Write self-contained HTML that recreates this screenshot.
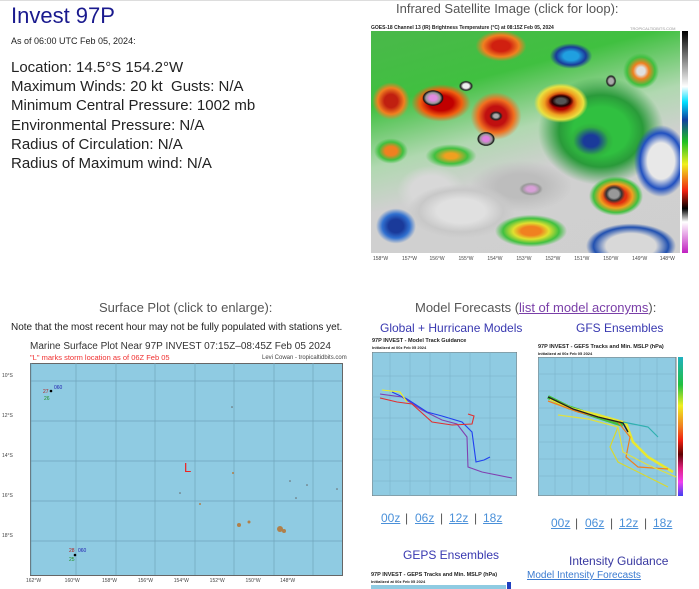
<!DOCTYPE html>
<html><head><meta charset="utf-8"><style>
*{margin:0;padding:0;box-sizing:border-box}
body{width:699px;height:589px;overflow:hidden;background:#fff;font-family:"Liberation Sans",sans-serif;position:relative}
.a{position:absolute;white-space:nowrap}
.h{color:#555;font-size:13px}
.b{color:#3838b0;font-size:12px}
.lk{color:#4a90d9;text-decoration:underline}
.ln{font-size:15px;color:#222;left:11px}
.sm{font-size:5px;color:#444}
</style></head><body>
<div style="position:absolute;left:0;top:0;width:699px;height:1px;background:#ddd"></div>
<div class="a" style="left:11px;top:3px;font-size:22px;color:#1a1a8e">Invest 97P</div>
<div class="a" style="left:11px;top:36px;font-size:9px;color:#222">As of 06:00 UTC Feb 05, 2024:</div>
<div class="a ln" style="top:59px">Location: 14.5°S 154.2°W</div>
<div class="a ln" style="top:78px">Maximum Winds: 20 kt&nbsp; Gusts: N/A</div>
<div class="a ln" style="top:97px">Minimum Central Pressure: 1002 mb</div>
<div class="a ln" style="top:117px">Environmental Pressure: N/A</div>
<div class="a ln" style="top:136px">Radius of Circulation: N/A</div>
<div class="a ln" style="top:155px">Radius of Maximum wind: N/A</div>

<div class="a h" style="left:396px;top:1px">Infrared Satellite Image (click for loop):</div>
<div class="a" style="left:371px;top:25px;font-size:5px;font-weight:bold;color:#222">GOES-18 Channel 13 (IR) Brightness Temperature (°C) at 08:15Z Feb 05, 2024</div>
<div class="a" style="left:630px;top:26px;font-size:4px;color:#999">TROPICALTIDBITS.COM</div>
<div style="position:absolute;left:371px;top:31px;width:309px;height:222px;overflow:hidden;background:
radial-gradient(ellipse 12px 9px at 62px 67px,#e08ae0 30%,#999 60%,#111 80%,transparent 90%),
radial-gradient(ellipse 10px 8px at 115px 108px,#e080e0 30%,#999 60%,#111 80%,transparent 90%),
radial-gradient(ellipse 14px 8px at 160px 158px,#d8a0d8 30%,#999 65%,transparent 85%),
radial-gradient(ellipse 8px 6px at 125px 85px,#aaa 30%,#222 60%,transparent 85%),
radial-gradient(ellipse 16px 9px at 190px 70px,#555 30%,#220000 55%,transparent 80%),
radial-gradient(ellipse 14px 12px at 243px 163px,#999 35%,#333 55%,transparent 80%),
radial-gradient(ellipse 6px 7px at 240px 50px,#aaa 40%,#222 70%,transparent 90%),
radial-gradient(ellipse 8px 6px at 95px 55px,#eee 40%,#222 70%,transparent 90%),
radial-gradient(ellipse 35px 22px at 70px 72px,#c00000 35%,#f06010 60%,transparent 85%),
radial-gradient(ellipse 30px 28px at 125px 85px,#c01010 35%,#f07020 60%,transparent 85%),
radial-gradient(ellipse 30px 22px at 190px 72px,#b00000 30%,#f0a020 55%,#e8e040 75%,transparent 90%),
radial-gradient(ellipse 22px 22px at 20px 70px,#c02010 30%,#f08020 60%,transparent 85%),
radial-gradient(ellipse 30px 18px at 130px 15px,#d02010 30%,#f08020 60%,transparent 85%),
radial-gradient(ellipse 20px 15px at 20px 120px,#f08020 30%,#40c040 60%,transparent 85%),
radial-gradient(ellipse 30px 14px at 80px 125px,#f0a020 20%,#40c040 55%,transparent 85%),
radial-gradient(ellipse 40px 18px at 160px 200px,#f08020 25%,#e0e030 45%,#40c040 70%,transparent 90%),
radial-gradient(ellipse 30px 22px at 245px 165px,#e03010 35%,#f0a020 55%,#40c040 75%,transparent 90%),
radial-gradient(ellipse 25px 22px at 25px 195px,#1a3a9a 30%,#3070d0 55%,transparent 80%),
radial-gradient(ellipse 60px 30px at 90px 180px,#e0e0e0 40%,#c8c8c8 70%,transparent 90%),
radial-gradient(ellipse 60px 30px at 150px 155px,#bdbdbd 40%,transparent 85%),
radial-gradient(ellipse 40px 30px at 60px 160px,#d8d8d8 50%,transparent 85%),
radial-gradient(ellipse 30px 40px at 290px 130px,#e8e8e8 45%,#2050c0 70%,transparent 90%),
radial-gradient(ellipse 50px 25px at 260px 215px,#d8d8d8 50%,#2050b0 75%,transparent 90%),
radial-gradient(ellipse 20px 20px at 270px 40px,#e0e0e0 20%,#f08020 40%,#40c040 70%,transparent 90%),
radial-gradient(ellipse 25px 15px at 200px 25px,#20a0e0 30%,#1a3a9a 60%,transparent 85%),
radial-gradient(ellipse 25px 20px at 220px 110px,#1a3a9a 30%,#30b040 70%,transparent 90%),
radial-gradient(ellipse 70px 60px at 230px 100px,#30c040 40%,#2a9a3a 60%,transparent 90%),
linear-gradient(165deg,#4ab84a 0%,#40c040 25%,#b0d8b0 45%,#d0d0d0 60%,#cfcfcf 100%)"></div>
<div style="position:absolute;left:682px;top:31px;width:6px;height:222px;background:linear-gradient(#000,#fff 25%,#00e0ff 32%,#1040a0 40%,#20c020 50%,#f0f020 60%,#f02010 72%,#000 80%,#fff 86%,#c020c0 100%)"></div>
<div class="a sm" style="left:373px;top:256px">158°W&nbsp;&nbsp;&nbsp;&nbsp;&nbsp;&nbsp;&nbsp;&nbsp;&nbsp;&nbsp;157°W&nbsp;&nbsp;&nbsp;&nbsp;&nbsp;&nbsp;&nbsp;&nbsp;&nbsp;156°W&nbsp;&nbsp;&nbsp;&nbsp;&nbsp;&nbsp;&nbsp;&nbsp;&nbsp;&nbsp;155°W&nbsp;&nbsp;&nbsp;&nbsp;&nbsp;&nbsp;&nbsp;&nbsp;&nbsp;&nbsp;154°W&nbsp;&nbsp;&nbsp;&nbsp;&nbsp;&nbsp;&nbsp;&nbsp;&nbsp;&nbsp;153°W&nbsp;&nbsp;&nbsp;&nbsp;&nbsp;&nbsp;&nbsp;&nbsp;&nbsp;&nbsp;152°W&nbsp;&nbsp;&nbsp;&nbsp;&nbsp;&nbsp;&nbsp;&nbsp;&nbsp;&nbsp;151°W&nbsp;&nbsp;&nbsp;&nbsp;&nbsp;&nbsp;&nbsp;&nbsp;&nbsp;&nbsp;150°W&nbsp;&nbsp;&nbsp;&nbsp;&nbsp;&nbsp;&nbsp;&nbsp;&nbsp;&nbsp;149°W&nbsp;&nbsp;&nbsp;&nbsp;&nbsp;&nbsp;&nbsp;&nbsp;&nbsp;148°W</div>

<div class="a h" style="left:99px;top:300px">Surface Plot (click to enlarge):</div>
<div class="a" style="left:11px;top:322px;font-size:10px;color:#222">Note that the most recent hour may not be fully populated with stations yet.</div>
<div class="a" style="left:30px;top:341px;font-size:10px;color:#333">Marine Surface Plot Near 97P INVEST 07:15Z–08:45Z Feb 05 2024</div>
<div class="a" style="left:30px;top:353px;font-size:7.5px;color:#f03030">"L" marks storm location as of 06Z Feb 05</div>
<div class="a" style="left:262px;top:355px;font-size:6px;color:#444">Levi Cowan - tropicaltidbits.com</div>
<svg style="position:absolute;left:30px;top:363px" width="313" height="213">
<rect x="0.5" y="0.5" width="312" height="212" fill="#8fcbe2" stroke="#666"/>
<g stroke="#6fa5bb" stroke-width="0.7">
<line x1="1" y1="18" x2="312" y2="18"/><line x1="1" y1="58" x2="312" y2="58"/><line x1="1" y1="98" x2="312" y2="98"/><line x1="1" y1="138" x2="312" y2="138"/><line x1="1" y1="178" x2="312" y2="178"/>
<line x1="1" y1="0" x2="1" y2="212"/><line x1="46" y1="0" x2="46" y2="212"/><line x1="86" y1="0" x2="86" y2="212"/><line x1="125" y1="0" x2="125" y2="212"/><line x1="165" y1="0" x2="165" y2="212"/><line x1="204" y1="0" x2="204" y2="212"/><line x1="244" y1="0" x2="244" y2="212"/><line x1="283" y1="0" x2="283" y2="212"/>
</g>
<text x="154" y="109" fill="#f02020" font-size="13" font-family="Liberation Sans">L</text>
<circle cx="21" cy="28" r="1.3" fill="#000"/><text x="13" y="30" font-size="5" fill="#b02020">27</text><text x="24" y="26" font-size="5" fill="#2020b0">060</text><text x="14" y="37" font-size="5" fill="#209020">26</text>
<circle cx="45" cy="192" r="1.3" fill="#000"/><text x="39" y="189" font-size="5" fill="#b02020">28</text><text x="48" y="189" font-size="5" fill="#2020b0">060</text><text x="39" y="198" font-size="5" fill="#209020">25</text>
<g fill="#b0804a"><circle cx="250" cy="166" r="3"/><circle cx="254" cy="168" r="2"/><circle cx="209" cy="162" r="2"/><circle cx="219" cy="159" r="1.5"/><circle cx="170" cy="141" r="1"/><circle cx="203" cy="110" r="1"/></g>
<g fill="#666"><circle cx="202" cy="44" r="0.8"/><circle cx="150" cy="130" r="0.8"/><circle cx="266" cy="135" r="0.8"/><circle cx="277" cy="122" r="0.8"/><circle cx="307" cy="126" r="0.8"/><circle cx="260" cy="118" r="0.8"/></g>
</svg>
<div class="a" style="left:2px;top:373px;font-size:5px;color:#444">10°S</div>
<div class="a" style="left:2px;top:413px;font-size:5px;color:#444">12°S</div>
<div class="a" style="left:2px;top:453px;font-size:5px;color:#444">14°S</div>
<div class="a" style="left:2px;top:493px;font-size:5px;color:#444">16°S</div>
<div class="a" style="left:2px;top:533px;font-size:5px;color:#444">18°S</div>
<div class="a sm" style="left:26px;top:578px">162°W&nbsp;&nbsp;&nbsp;&nbsp;&nbsp;&nbsp;&nbsp;&nbsp;&nbsp;&nbsp;&nbsp;&nbsp;&nbsp;&nbsp;&nbsp;&nbsp;&nbsp;160°W&nbsp;&nbsp;&nbsp;&nbsp;&nbsp;&nbsp;&nbsp;&nbsp;&nbsp;&nbsp;&nbsp;&nbsp;&nbsp;&nbsp;&nbsp;&nbsp;158°W&nbsp;&nbsp;&nbsp;&nbsp;&nbsp;&nbsp;&nbsp;&nbsp;&nbsp;&nbsp;&nbsp;&nbsp;&nbsp;&nbsp;&nbsp;156°W&nbsp;&nbsp;&nbsp;&nbsp;&nbsp;&nbsp;&nbsp;&nbsp;&nbsp;&nbsp;&nbsp;&nbsp;&nbsp;&nbsp;&nbsp;154°W&nbsp;&nbsp;&nbsp;&nbsp;&nbsp;&nbsp;&nbsp;&nbsp;&nbsp;&nbsp;&nbsp;&nbsp;&nbsp;&nbsp;&nbsp;152°W&nbsp;&nbsp;&nbsp;&nbsp;&nbsp;&nbsp;&nbsp;&nbsp;&nbsp;&nbsp;&nbsp;&nbsp;&nbsp;&nbsp;&nbsp;150°W&nbsp;&nbsp;&nbsp;&nbsp;&nbsp;&nbsp;&nbsp;&nbsp;&nbsp;&nbsp;&nbsp;&nbsp;&nbsp;&nbsp;148°W</div>

<div class="a h" style="left:415px;top:300px">Model Forecasts (<span style="color:#7a3fa8;text-decoration:underline">list of model acronyms</span>):</div>
<div class="a b" style="left:380px;top:321px">Global + Hurricane Models</div>
<div class="a b" style="left:576px;top:321px">GFS Ensembles</div>

<div class="a" style="left:372px;top:338px;font-size:5.5px;font-weight:bold;color:#222">97P INVEST - Model Track Guidance</div>
<div class="a" style="left:372px;top:345px;font-size:4px;font-weight:bold;color:#222">Initialized at 00z Feb 05 2024</div>
<svg style="position:absolute;left:372px;top:352px" width="145" height="144">
<rect x="0" y="0" width="145" height="144" fill="#8fcbe2" stroke="#777"/>
<g stroke="#78b0c6" stroke-width="0.5"><line x1="0" y1="24" x2="145" y2="24"/><line x1="0" y1="45" x2="145" y2="45"/><line x1="0" y1="66" x2="145" y2="66"/><line x1="0" y1="87" x2="145" y2="87"/><line x1="0" y1="108" x2="145" y2="108"/><line x1="0" y1="129" x2="145" y2="129"/><line x1="18" y1="0" x2="18" y2="144"/><line x1="38" y1="0" x2="38" y2="144"/><line x1="58" y1="0" x2="58" y2="144"/><line x1="78" y1="0" x2="78" y2="144"/><line x1="98" y1="0" x2="98" y2="144"/><line x1="118" y1="0" x2="118" y2="144"/></g>
<g fill="none" stroke-width="1.1">
<polyline stroke="#8040b0" points="8,42 30,45 50,58 70,68 85,72 95,85 96,115 110,120 140,126"/>
<polyline stroke="#2040f0" points="20,40 35,47 55,60 70,64 90,70 100,80 104,110 112,108 118,105"/>
<polyline stroke="#e03030" points="8,46 25,50 40,52 60,70 80,73 100,72 102,64 96,62"/>
<polyline stroke="#f0f020" points="10,38 28,40 35,50"/>
</g></svg>
<div class="a" style="left:538px;top:344px;font-size:5.5px;font-weight:bold;color:#222">97P INVEST - GEFS Tracks and Min. MSLP (hPa)</div>
<div class="a" style="left:538px;top:351px;font-size:4px;font-weight:bold;color:#222">Initialized at 00z Feb 05 2024</div>
<svg style="position:absolute;left:538px;top:357px" width="147" height="139">
<rect x="0" y="0" width="138" height="139" fill="#8fcbe2" stroke="#777"/>
<g stroke="#78b0c6" stroke-width="0.5"><line x1="0" y1="17" x2="138" y2="17"/><line x1="0" y1="34" x2="138" y2="34"/><line x1="0" y1="51" x2="138" y2="51"/><line x1="0" y1="68" x2="138" y2="68"/><line x1="0" y1="85" x2="138" y2="85"/><line x1="0" y1="102" x2="138" y2="102"/><line x1="0" y1="119" x2="138" y2="119"/><line x1="17" y1="0" x2="17" y2="139"/><line x1="34" y1="0" x2="34" y2="139"/><line x1="51" y1="0" x2="51" y2="139"/><line x1="68" y1="0" x2="68" y2="139"/><line x1="85" y1="0" x2="85" y2="139"/><line x1="102" y1="0" x2="102" y2="139"/><line x1="119" y1="0" x2="119" y2="139"/></g>
<g fill="none" stroke-width="1.2">
<polyline stroke="#40c040" stroke-width="4" points="10,40 30,50 60,60 85,68"/>
<polyline stroke="#e8e830" stroke-width="2.5" points="12,42 35,52 60,58 88,66 95,85 110,100 135,115"/>
<polyline stroke="#f08020" points="10,44 40,55 80,65 92,80 88,100 100,110 130,112"/>
<polyline stroke="#d8d830" points="80,70 72,90 80,105 130,130"/>
<polyline stroke="#e0e040" points="20,58 50,62 80,70 85,95 110,108 138,120"/>
<polyline stroke="#30b0b0" points="85,65 110,70 120,80"/>
<polyline stroke="#202020" stroke-width="1.4" points="10,40 35,52 60,60 85,66 90,75"/>
</g>
<defs><linearGradient id="cb" x1="0" y1="0" x2="0" y2="1"><stop offset="0" stop-color="#20b0c0"/><stop offset=".2" stop-color="#20c040"/><stop offset=".35" stop-color="#f0f020"/><stop offset=".5" stop-color="#f08020"/><stop offset=".6" stop-color="#f02010"/><stop offset=".7" stop-color="#600000"/><stop offset=".8" stop-color="#e02080"/><stop offset=".9" stop-color="#f040f0"/><stop offset="1" stop-color="#4040f0"/></linearGradient></defs>
<rect x="140" y="0" width="5" height="139" fill="url(#cb)"/>
</svg>

<div class="a lk" style="left:381px;top:511px;font-size:12px">00z</div><div class="a" style="left:405px;top:511px;font-size:12px;color:#555">|</div>
<div class="a lk" style="left:415px;top:511px;font-size:12px">06z</div><div class="a" style="left:440px;top:511px;font-size:12px;color:#555">|</div>
<div class="a lk" style="left:449px;top:511px;font-size:12px">12z</div><div class="a" style="left:474px;top:511px;font-size:12px;color:#555">|</div>
<div class="a lk" style="left:483px;top:511px;font-size:12px">18z</div>
<div class="a lk" style="left:551px;top:516px;font-size:12px">00z</div><div class="a" style="left:575px;top:516px;font-size:12px;color:#555">|</div>
<div class="a lk" style="left:585px;top:516px;font-size:12px">06z</div><div class="a" style="left:610px;top:516px;font-size:12px;color:#555">|</div>
<div class="a lk" style="left:619px;top:516px;font-size:12px">12z</div><div class="a" style="left:644px;top:516px;font-size:12px;color:#555">|</div>
<div class="a lk" style="left:653px;top:516px;font-size:12px">18z</div>

<div class="a b" style="left:403px;top:548px">GEPS Ensembles</div>
<div class="a b" style="left:569px;top:554px;color:#3838a0">Intensity Guidance</div>
<div class="a" style="left:527px;top:570px;font-size:10px;color:#3a7ad0;text-decoration:underline">Model Intensity Forecasts</div>
<div class="a" style="left:371px;top:572px;font-size:5.5px;font-weight:bold;color:#222">97P INVEST - GEPS Tracks and Min. MSLP (hPa)</div>
<div class="a" style="left:371px;top:579px;font-size:4px;font-weight:bold;color:#222">Initialized at 00z Feb 05 2024</div>
<div style="position:absolute;left:371px;top:585px;width:135px;height:4px;background:#8fcbe2"></div>
<div style="position:absolute;left:507px;top:582px;width:4px;height:7px;background:#2040c0"></div>
</body></html>
